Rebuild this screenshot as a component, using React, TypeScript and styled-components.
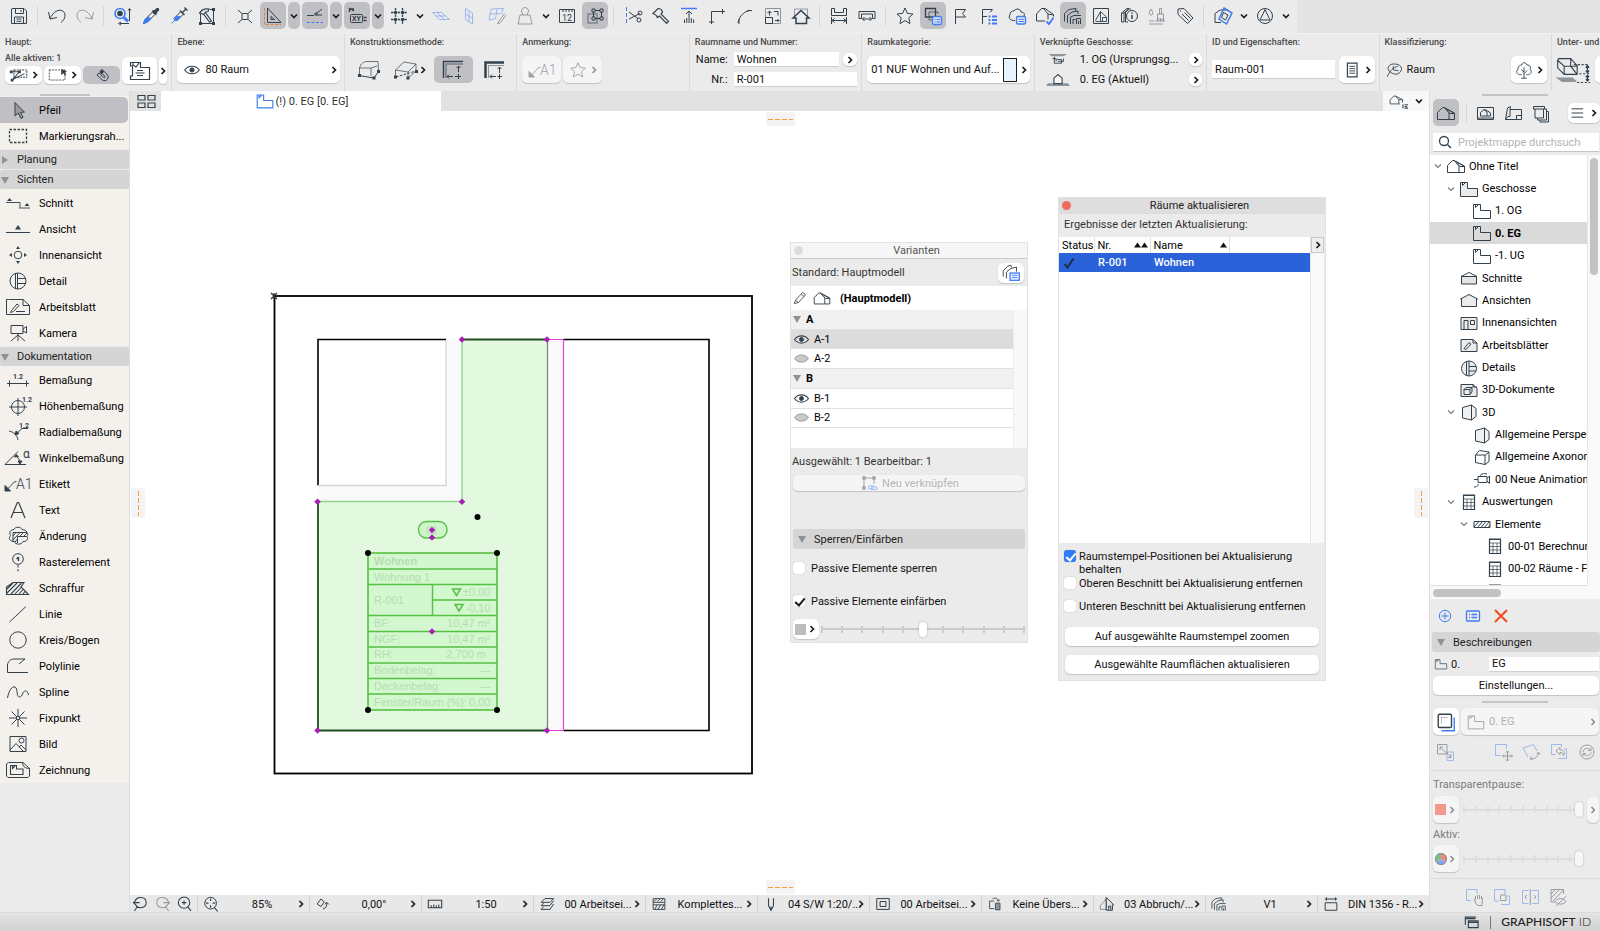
import React, { ReactNode } from "react";
import styled, { createGlobalStyle, css } from "styled-components";

const INK = "#33414c";
const BLUE = "#3f7df5";
const FONT = `Roboto, "Liberation Sans", sans-serif`;

const GlobalStyle = createGlobalStyle`
  * { box-sizing: border-box; }
  html, body { margin: 0; padding: 0; height: 100%; overflow: hidden; }
  body { font-family: ${FONT}; font-size: 11px; color: #111; background: #ebebeb; }
  #root { height: 100%; }
  button, input, select { font: inherit; color: inherit; margin: 0; }
  button { border: 0; background: none; padding: 0; }
  ul { list-style: none; margin: 0; padding: 0; }
`;

/* ---------- icons: drawn on a 24 x 24 grid around the point 12,12 ---------- */

const roomPath = "M3.5 5.5H10.5V11.5H20.5V19.5H3.5Z M5.5 5.5V8.5L8.5 5.5";
const housePath = "M3.5 18.5V11.5L8.5 6.5H10L20.5 12V18.5H3.5 M10 6.5L15 11.5V18.5 M12 7.5L20.5 12.5H16L12.5 9";
const eyePath = "M4 12C8 6.5 16 6.5 20 12C16 17.5 8 17.5 4 12Z";
const starPath = "M12 4L14.4 9.4L20 10L15.8 13.8L17 19.6L12 16.6L7 19.6L8.2 13.8L4 10L9.6 9.4Z";

const ICONS: Record<string, ReactNode> = {
  save: <path d="M5 4.5H17L19.5 7V19.5H4.5V5Z M8.5 4.5V9.5H16.5V4.5 M7.5 19.5V13H16.5V19.5 M9.5 15h5 M9.5 17.3h5 M14 6v2" />,
  undo: <path d="M3.5 8L5 15L12 13.5 M5 14.5C8 8 14 4 18.5 7.5C21 10 20.5 15 16 18.5" />,
  redo: <path d="M20.5 8L19 15L12 13.5 M19 14.5C16 8 10 4 5.5 7.5C3 10 3.5 15 8 18.5" />,
  find: <><circle cx="9" cy="9.5" r="5" stroke={BLUE} strokeWidth="1.6" /><circle cx="9" cy="9.5" r="2.4" fill={INK} /><path d="M13 13.5L17 17.5" stroke={BLUE} strokeWidth="3" /><path d="M18.5 5v12M9 19.5h9M17 6.5L18.5 4.5L20 6.5M10 18L7.5 19.5L10 21" /></>,
  dropper: <><path d="M13.5 6.5L17.5 10.5" strokeWidth="2" /><path d="M15.5 8.5L18.5 5.5" strokeWidth="3.4" strokeLinecap="round" /><path d="M13.5 8L6 15.5L4.5 19.5L8.5 18L16 10.5" /><path d="M4.5 19.5L6 16L9 13L12 14.5L8.5 18Z" fill={BLUE} stroke={BLUE} /></>,
  syringe: <><path d="M13 6.5L17.5 11M15.5 8.5L19 5M17.5 3.5L20.5 6.5" strokeWidth="1.4" /><path d="M14 7.5L7 14.5L9.5 17L16.5 10" /><path d="M10 12L7 14.5L9.5 17L13.5 13Z" fill={BLUE} stroke={BLUE} /><path d="M8 16L4.5 19.5" stroke={BLUE} /></>,
  hammerbox: <><path d="M5.5 10V19.5H18.5V5.5H15" /><path d="M4.5 9C7 5 10 4.5 14 5L13 7.5L10.5 8L8.5 10.5L6.5 9.5Z M10 8L16.5 17L14.5 18L8.5 10" strokeWidth="1.2" /><path d="M4 18h3v3H4zM17 18h3v3h-3zM17 4h3v3h-3z" fill={INK} stroke="none" /></>,
  cross: <><path d="M5 6L9.5 10M19 6L14.5 10M5 19L9.5 15M19 19L14.5 15" /><rect x="9" y="9.5" width="6" height="6" rx="1" /></>,
  setsquare: <><path d="M6.5 4V18.5H20Z M10 12.5V15.5H13.5Z" /><path d="M3.5 4V20.5H20" stroke="#e08236" strokeDasharray="3 1.5" /></>,
  guide: <><path d="M4 11.5H11 M13 8V12M11 10H15M14 9L19 5M13.5 11H19" /><path d="M4 18.5H20" stroke={BLUE} strokeDasharray="3 1.5" /></>,
  xy: <><rect x="5.5" y="10.5" width="12" height="8" rx="1" /><path d="M4.5 4V8M4.5 4L9 7M5 5H9M18.5 13.5h3M18.5 16.5h3" strokeWidth="1.4" /><text x="7" y="17" fontSize="7" fontWeight="700" fill={INK} stroke="none">XY</text></>,
  grid: <><path d="M8.5 4V20M15.5 4V20M4 8.5H20M4 15.5H20" strokeWidth="1.3" strokeDasharray="2.5 .8" /><path d="M7.5 7.5h2v2h-2zM14.5 7.5h2v2h-2zM7.5 14.5h2v2h-2zM14.5 14.5h2v2h-2z" fill={INK} /></>,
  plane: <path d="M3.5 8.5H12.5L20.5 15.5H10.5Z M8 8.5L15.5 15.5M7 12H16.5" stroke={BLUE} />,
  planeV: <path d="M8.5 4.5L15.5 9V20L8.5 15.5Z M8.5 10L15.5 14.5M12 7V17.5" stroke={BLUE} />,
  planeEdit: <><path d="M6 5L18.5 4.5L16 10M6 5L4 16L10 15M5 10L15 9.5M12 5L10.5 15" stroke={BLUE} /><path d="M19.5 9.5L14 17L12.5 20L15.5 18.5L21 11" /></>,
  weight: <path d="M7 11H17L19 20H5Z M9.5 11V9.5A3.5 3.5 0 1 1 14.5 9.5V11" />,
  ruler12: <><path d="M4.5 5.5H19.5V18.5H4.5Z M8 5.5V8M11 5.5V8M14 5.5V8M17 5.5V8" /><text x="7" y="17" fontSize="9" fill={INK} stroke="none">12</text></>,
  groupbox: <><path d="M5 10H14V19H5Z" opacity=".45" strokeWidth="1.5" /><path d="M10.5 6.5H18.5V14.5H10.5Z" /><path d="M9 5h3v3H9zM17 5h3v3h-3zM9 13h3v3H9zM17 13h3v3h-3z" fill="#bfbfc4" /></>,
  scissors: <><path d="M5.5 3V19" stroke={BLUE} strokeDasharray="4 2" /><path d="M8 8L17 14.5M8 15L19 9.5" /><circle cx="18" cy="16" r="2" /><circle cx="19" cy="9" r="2" /></>,
  axe: <path d="M4 9.5L9 4.5C11.5 4.5 13 6 13.5 8L12 10L19.5 17.5L17.5 19.5L10.5 12L8.5 13.5C8 11.5 6.5 10.5 4 9.5Z" strokeWidth="1.2" />,
  elevate: <><path d="M4 4.5H20" stroke={BLUE} strokeWidth="1.5" /><path d="M12 19V7.5M9 10L12 7L15 10M7.5 19V15.5M9.8 19V14M14.3 19V14M16.6 19V15.5" /></>,
  corner: <path d="M6.5 20V7.5H20 M4 18H9M17.5 5V10" />,
  arcCorner: <path d="M5 19C6 12 12 6 19 6.5 M19 6.5H14M6 20V15" />,
  resize: <><path d="M4.5 4.5H19.5V19.5H4.5Z" opacity=".5" /><path d="M4.5 13.5H11.5V19.5H4.5Z" /><path d="M8.5 11.5V7M6.5 9L8.5 7L10.5 9M14 16.5H18M16.5 15L18 16.5L16.5 18M13 7.5H17V11.5" /></>,
  home: <><path d="M5.5 12V5H18.5V12" opacity=".45" /><path d="M4 14L12 6.5L20 14H17.5V19.5H7V14Z" strokeWidth="1.5" /></>,
  width: <path d="M4.5 4.5V11.5H19.5V4.5H16.5V8.5H7.5V4.5Z M4.5 13V20M19.5 13V20M5 16.5H19M7.5 14.5L5 16.5L7.5 18.5M16.5 14.5L19 16.5L16.5 18.5" />,
  widthIn: <path d="M4 7.5H20V14.5H17.5V10H6.5V14.5H4Z M7.5 15H16.5M9.5 13L7.5 15L9.5 17M14.5 13L16.5 15L14.5 17" />,
  star: <path d={starPath} />,
  layersList: <><path d="M4.5 4.5H14.5V13H4.5Z" strokeWidth="1.3" /><path d="M8 8H17V10M8 8V16H11" opacity=".7" /><rect x="11.5" y="12.5" width="9" height="8" rx="1.5" fill="#d4e0f7" stroke={BLUE} strokeWidth="1.3" /><path d="M13.5 15.5h1M15.5 15.5h3.5M13.5 18h1M15.5 18h3.5" stroke={BLUE} /></>,
  flag: <path d="M6.5 20V5.5M6.5 5.5H16.5L13.5 9.5L16.5 13H6.5" />,
  flagList: <><path d="M5.5 20V5.5H15.5L13 8.5M5.5 12.5H10" /><path d="M11.5 12.5h2M15 12.5h5M11.5 16h2M15 16h5M11.5 19.5h2M15 19.5h5" stroke={BLUE} strokeWidth="2" /></>,
  cloudList: <><path d="M10 16.5C5 17 3 13.5 5 11C4.5 8 7.5 6.5 9 7C11 4 15.5 4.5 16 8C19 8 20 10 19 12" /><rect x="11.5" y="12.5" width="9" height="7.5" rx="1.5" stroke={BLUE} strokeWidth="1.4" /><path d="M13.5 15.3h5.5M13.5 17.5h5.5" stroke={BLUE} /></>,
  houseCheck: <><path d="M12 17H3.5V10L8.5 4.5H12L20.5 10.5V12.5 M8.5 4.5H10.5L15 10V15.5 M15 10L20.5 11" /><path d="M13.5 17.5L16 20L20.5 13.5" stroke={BLUE} strokeWidth="1.8" /></>,
  variants: <path d="M3.5 17.5V9.5L8 5.5L15 4.5L14.5 7.5M6.5 19V11.5L11 8L17 7V10M9.5 20V13L13 11.5H20M12 20V15.5H14.5M15.5 20V14.5H19.5V20M17.5 17V20" />,
  frameHouse: <><path d="M4.5 4.5H19.5V19.5H4.5Z" /><path d="M6.5 16.5L11.5 7.5V17.5M11.5 7.5L17.5 13V17.5H6.5M13.5 17V13.5H17" strokeWidth=".9" /></>,
  info3d: <><path d="M4.5 9V18H7V9Z M4.5 9L10 4.5H12L7 9M8.5 8V18H11M8.5 8L12.5 5H14" /><circle cx="15" cy="12" r="5.5" /><path d="M15 11V15M15 8.5V9.7" strokeWidth="1.5" /></>,
  paint: <path d="M6 5C8 8 8.5 11 6 11C3.5 11 4 8 6 5Z M12.5 10H18.5V15H12.5ZM14.5 10V4.5H16.5V10M10 17H20M4 20H18M4 17H9M12.5 15V17M15.5 15V17M18.5 15V17" />,
  tag: <path d="M5 5L11 4.5L20 14L14.5 19.5L5 10.5Z M9 10L15.5 16.5M11.5 8.5L17.5 14.5M7 7h1" />,
  cubeBlue: <><path d="M4 18.5V9.5L9 6H17M4 18.5H10" /><path d="M13 4L21 9L15.5 20L8 15Z" stroke={BLUE} strokeWidth="1.5" /><path d="M12.5 8.5L17 11L14.5 16L10.5 13.5Z" /></>,
  compass: <><circle cx="12" cy="12" r="7.5" /><path d="M12 5.5L17 16H7Z" /></>,

  marqueeA: <><path d="M6.5 6.5H20.5V14.5H6.5Z" strokeDasharray="2 1" strokeWidth="1.2" /><path d="M3 8.5H13.5M4.5 17.5L12 9M4 17.5L18 10.5" strokeWidth="1.2" /><path d="M2 7h3v3H2zM3 16h3v3H3zM11 7h3v3h-3z" fill={INK} stroke="none" /></>,
  marqueeB: <><path d="M2.5 6.5H19.5V17.5H2.5Z" strokeDasharray="2 1.2" /><path d="M15.5 5.5L22 8L19.5 9L21 11.5L19.5 12.5L18 10L15.5 12Z" fill={INK} stroke="none" /></>,
  magnet: <><path d="M6 12L12.5 18C17.5 21 21.5 15 18 11L12 5.5L9.5 8L15.5 13.5C16 15 15 15.5 14 15L8.5 9.5Z" strokeWidth="1.2" /><path d="M12 5.5L9 8.5L11.5 11L14.5 8Z" fill={INK} stroke="none" /></>,
  zone: <path d="M2.5 3.5H12.5V8.5H21.5V20.5H2.5V17H4.5V7H2.5Z M5 3.5V6L8 8L11 4M9 11.5H15M7.5 14H16.5M9 16.5H15" strokeWidth="1.2" />,
  eye: <><path d={eyePath} strokeWidth="1.2" /><circle cx="12" cy="12" r="2.3" fill={INK} /></>,
  eyeOff: <path d={eyePath} fill="#c9c9c9" stroke="#8f8f8f" />,
  slabA: <><path d="M2.5 17V10C4 5 7 4 9 3.5H21L21.5 12M2.5 10H14L20 8M14 10V18" opacity=".7" /><path d="M2 17.5L17 20L21.5 13.5" /><path d="M1 16h3v3H1zM15.5 18.5h3v3h-3zM20 12h3v3h-3z" fill={INK} stroke="none" /></>,
  slabB: <><path d="M1.5 18V12L10 4L22 6V13L14 20M1.5 12L14 14L22 6M14 14V20" opacity=".7" /><path d="M2 19L22 13" strokeDasharray="2.5 1.5" /><path d="M0 17.5h3v3H0zM12.5 18.5h3v3h-3zM21 12h3v3h-3z" fill={INK} stroke="none" /></>,
  cornerMeasure: <><path d="M2.5 20V3.5H22" strokeWidth="1.5" /><path d="M5 20V6H22" strokeWidth="1.5" opacity=".5" /><path d="M17.5 8V14M15.5 10L17.5 8L19.5 10M6 18.5H12M8 16.5L6 18.5L8 20.5M14 18.5H20M17.5 16V21" /></>,
  cornerMeasure2: <><path d="M3.5 20V4.5H22" strokeWidth="2.5" /><path d="M6.5 20V7.5H22" opacity=".5" /><path d="M17.5 9V15M15.5 11L17.5 9L19.5 11M8 18.5H14M10 16.5L8 18.5L10 20.5M15.5 18.5H20M17.5 16V21" /></>,
  a1: <><path d="M0 18.5L4 14.5C7 12 7 9.5 10.5 9.5" /><path d="M-1 13.5V19H4.5Z" fill="currentColor" /><text x="10" y="17" fontSize="14" fontWeight="300" fill="currentColor" stroke="none">A1</text></>,
  storeyUp: <><path d="M2 5.5H22L18 8H5Z" fill="#8d969c" stroke="none" /><path d="M8 8.5V15.5H16V11.5H11M6 10.5h4v3M12 13.5h6v-3" /></>,
  storeyHome: <><path d="M1 15.5H23L25 18.5H-1Z" fill="#8d969c" stroke="none" /><path d="M7.5 16V10L12 6L16.5 10V16Z" fill="#f5f5f5" strokeWidth="1.2" /></>,
  doc: <><path d="M7 4.5H17.5V19.5H7Z" strokeWidth="1.3" /><path d="M9 8h6.5M9 10.5h6.5M9 13h6.5M9 15.5h6.5" /></>,
  leaf: <path d="M3 21C7 12 11 9 17 7M7.5 15C1 11 4.5 3.5 12 4C18 4 22 6 22 11C21 17 14 20 7.5 15M11 12V7M11.5 12L18 13" strokeWidth="1.2" />,
  tree: <path d="M12 21V9M9 21H15M12 16L15.5 12.5M12 14L9 11.5M9.5 17C4 18 2.5 13 5.5 11.5C5 7 9 6.5 9.5 6.5C11 2.5 15 4 15 6.5C19 6.5 20 9.5 18.5 11.5C21.5 13 20 18 14.5 17" />,
  boxStack: <><path d="M-4 3V10L2 16H14V8L8 1.5H-3Z M-4 3L2 8.5H14M2 8.5V16M8 1.5V8.5L14 16" /><path d="M-6 19H10L14 23H0Z" fill="#8d969c" stroke="none" /><path d="M14 23.5H26M16 15.5H26M11 7H24" strokeDasharray="2 1.5" /><path d="M23.5 8V14M22 10L23.5 8L25 10M22 12.5L23.5 14.5L25 12.5M23.5 17V22M22 18.5L23.5 17L25 18.5M22 20.5L23.5 22L25 20.5" strokeWidth="1.2" /></>,

  fourUp: <path d="M4 6.5H11V11H4ZM14 6.5H21V11H14ZM4 14H11V18.5H4ZM14 14H21V18.5H14Z" strokeWidth="1.2" />,
  room: <path d={roomPath} />,
  roomGray: <path d={roomPath} fill="#ebebeb" />,
  roomBlue: <path d={roomPath} stroke={BLUE} strokeWidth="1.2" />,
  house: <path d={housePath} />,
  houseList: <><path d="M2.5 15.5V10.5L7 6H9L17.5 10.5V14M2.5 15.5H14M9 6L13 10.5V15.5M13 10.5H17.5" /><path d="M18 16V21M20 16.5h4M20 20.5h4M20 18.5h3" strokeWidth="1.3" /></>,

  arrow: <path d="M9 4.5V18L12.2 15L15 20.5L17 19.3L14.5 14.2H18.5Z" fill="#9b9b9f" />,
  marquee: <path d="M3.5 5.5H20.5V18.5H3.5Z" strokeDasharray="2.5 1.5" strokeWidth="1.3" />,
  section: <><path d="M0 11.5H14V16.5M13 17H24" opacity=".9" /><path d="M1 10L3.5 7L6 10ZM18.5 15L21 12L23.5 15Z" fill={INK} stroke="none" /></>,
  elevation: <><path d="M0 15.5H24" /><path d="M9 12.5L12 8L15 12.5Z" fill={INK} stroke="none" /></>,
  interior: <><circle cx="12" cy="12" r="3.8" /><path d="M10 6L12 3L14 6ZM10 18L12 21L14 18ZM6 10L3 12L6 14ZM18 10L21 12L18 14Z" fill={INK} stroke="none" /></>,
  detail: <><circle cx="12" cy="12" r="8" /><path d="M9.5 4.5V19.5M11.5 4V20M11.5 9.5H19.5M11.5 14.5H19.5" /></>,
  worksheet: <><path d="M2.5 4.5H17L23.5 10.5V19.5H.5V4.5Z M17 4.5V10.5H23.5" /><path d="M5.5 15.5L11 9L13 10.5L7.5 16.5L4.5 17.5ZM10 16.5H19" /></>,
  camera: <path d="M5 4.5H17V12.5H5Z M17 8L20.5 5.5V12L17 10M12 12.5V20M12 14L5 20M12 14L19 20" />,
  dim: <><path d="M1 15.5H23M3.5 12.5V18.5M20.5 12.5V18.5" /><text x="7" y="11" fontSize="7" fontWeight="700" fill={INK} stroke="none">1.2</text></>,
  levelDim: <><circle cx="12" cy="13" r="6.5" /><path d="M12 4V22M3 13H21" /><text x="16" y="7.5" fontSize="7" fontWeight="700" fill={INK} stroke="none">1.2</text></>,
  radialDim: <><path d="M3 11C8 12 11 15 12 20M10 14L16 8.5H22" /><path d="M9 15L10 11L13 13.5Z" fill={INK} /><text x="13" y="7.5" fontSize="7" fontWeight="700" fill={INK} stroke="none">1.2</text></>,
  angleDim: <><path d="M-1 18.5H20M-1 18.5L12 5.5M10 10C13 12 14 15 14 17" /><path d="M8.5 11L10 8.5L12.5 10.5ZM12 15H16L14 18Z" fill={INK} /><text x="17" y="12" fontSize="12" fill={INK} stroke="none">α</text></>,
  textA: <path d="M5 20L11.3 4.5H12.7L19 20M7.5 14.5H16.5" strokeWidth="1.2" />,
  change: <><path d="M8 5.5C9 2.5 15 2.5 16 5.5C21 6 23 10 21 12.5C23 15 20 18 17 17.5C16 21 9 21 8.5 17.5C4 18 2 14 4.5 11.5C2.5 8 5 5.5 8 5.5Z" /><path d="M7 8.5H21M7 8.5V18M11.5 12.5H21M11.5 12.5V19M7 12L10 8.5M7 16L14 8.5M14 12L17.5 8.5M9 18L11.5 15M18 12L21 9" /></>,
  gridEl: <><circle cx="12" cy="9" r="5.3" /><path d="M12 15V22" strokeDasharray="2.5 1.5" /><path d="M12.5 7V11M12.5 7L10.5 9" strokeWidth="1.4" /></>,
  hatch: <path d="M.5 18.5V11L7 6.5H18L15 11L22.5 18.5Z M1 17L11 7M5 18L15.5 7M9 18L15 11.5M13 18L17 13.5M17 18L19 15.5M1 13L7 7" strokeWidth="1.1" />,
  line: <path d="M3.5 20L20 4.5" />,
  circle: <circle cx="12" cy="12" r="8.2" />,
  polyline: <path d="M22 18.5H1.5V11C2 7 5 5 8 5H19L13 10" />,
  spline: <path d="M1.5 18C3 10 6 6 9 7C12 8 10 17 13.5 17C17 17 16 11 19.5 11C21.5 11 22 12.5 22.5 15" />,
  hotspot: <path d="M12 3V10M12 14V21M3 12H10M14 12H21M5.5 5.5L10.5 10.5M13.5 13.5L18.5 18.5M18.5 5.5L13.5 10.5M10.5 13.5L5.5 18.5M10.5 10.5H13.5V13.5H10.5Z" />,
  image: <><path d="M4 4.5H20V19.5H4Z M4 18L10 11.5L17 19M13 15L15 13L20 18" /><circle cx="15.5" cy="8.5" r="2.5" /></>,
  drawing: <><path d="M2.5 4.5H17L23.5 10.5V18L22 19.5H2L.5 18V6Z M17 4.5C16 8 19 10.5 23.5 10.5" /><path d="M4.5 7.5H10.5V11H17V16.5H4.5Z M6.5 8V10.5L9 8" strokeWidth="1.1" /></>,

  frameHouseSmall: <><path d="M4.5 6.5H20.5V18.5H4.5Z M4.5 17H20.5" /><path d="M7.5 15V11.5L11 8.5L14 11V15ZM11 8.5L14 9.5L17.5 12V15H14" /></>,
  layoutBook: <path d="M4.5 18.5L6.5 7L9.5 5.5L9 8.5H20.5V18.5H4.5L7 15.5H9V8.5M15.5 18V14.5H20.5" />,
  publisher: <path d="M4.5 5.5H15.5V8H4.5ZM6 8V17H14.5V8M15.5 8H17.5V19H8.5V17M17.5 10.5H19.5V21H11V19" />,
  menu: <path d="M3 7H17M3 12H17M3 17H17" strokeWidth="1.2" />,
  search: <><circle cx="11" cy="11" r="4.5" strokeWidth="1.3" /><path d="M14.5 14.5L18 18" strokeWidth="1.5" /></>,
  sections: <><path d="M4.5 10.5H19.5V18H4.5Z" fill="#e4e4e4" /><path d="M4 10.5L12 6.5L20 10.5" /></>,
  elevations: <path d="M4.5 18.5V11H3.5L12 6.5L20.5 11H19.5V18.5Z" fill="#ebebeb" />,
  interiors: <><path d="M4 6.5H20V18.5H4Z" fill="#ebebeb" /><path d="M7 18V9.5H11V18M13.5 9.5H17.5V13.5H13.5Z" /></>,
  sheetSmall: <><path d="M4 6.5H16L20 10V18.5H4Z" fill="#ebebeb" /><path d="M7 15.5L12 9.5L14 11L9 16.5ZM16 6.5V10H20" /></>,
  detailSmall: <><circle cx="12" cy="12.5" r="7.5" fill="#ebebeb" /><path d="M9.5 6V19M12 5V20M12 10.5H19M12 15H19" /></>,
  doc3d: <><path d="M4 6.5H16L20 10V18.5H4Z" fill="#ebebeb" /><path d="M7 11.5L9 9.5H15V14L13 16.5H7ZM7 11.5H13V16.5M13 11.5L15 9.5M16 6.5V9H20" /></>,
  cube: <path d="M5.5 7.5L14.5 5V20L5.5 18Z M14.5 5L19 8.5V16.5L14.5 20" fill="#f1f1f1" />,
  axono: <path d="M5.5 10H15V19.5L5.5 17.5ZM5.5 10L9.5 5.5L19 7L15 10.5M19 7V16.5L15 19.5" />,
  anim: <path d="M8 9.5H17V15.5H8ZM17 11.5L19.5 9V16.5L17 14M11 9.5C9 7 14 6 17 7M4 20C8 20 8 18 8.5 17M4 12.5H8" />,
  tableGrid: <><path d="M6.5 5H17.5V19.5H6.5ZM6 5.5H18" strokeWidth="1.2" /><path d="M6.5 9H17.5M6.5 12.5H17.5M6.5 16H17.5M10 9V19.5M14 9V19.5" strokeWidth=".7" /></>,
  wall: <path d="M4 9.5H20V15.5H4ZM4 15L9 9.5M7.5 15.5L12.5 9.5M11 15.5L16 9.5M14.5 15.5L19.5 9.5M18 15.5L20 13" />,
  plus: <><circle cx="12" cy="12" r="5.7" stroke={BLUE} /><path d="M12 8.5V15.5M8.5 12H15.5" stroke={BLUE} /></>,
  list: <><rect x="5.5" y="7" width="13" height="10" rx="1" stroke={BLUE} strokeWidth="1.3" /><path d="M8 10.5h1M10.5 10.5H16M8 13.5h1M10.5 13.5H16" stroke={BLUE} strokeWidth="1.3" /></>,
  del: <path d="M6 6L18 18M18 6L6 18" stroke="#f04a1d" strokeWidth="2" />,
  trace: <><path d="M7 21.5H21V7" stroke={BLUE} strokeWidth="1.5" /><rect x="3.5" y="3.5" width="14.5" height="14.5" rx="1.5" strokeWidth="1.5" /><path d="M7 14V7H14" opacity=".4" /></>,
  swap: <><path d="M14 12V20.5H20.5V12Z" stroke={BLUE} /><path d="M4.5 4.5H14V14H4.5ZM7 7L18 17M7 10V7H10M18 14V17.5H15" /></>,
  traceMove: <><path d="M10 15.5H4.5V4.5H15.5V9" stroke={BLUE} /><path d="M16.5 11V21M11.5 16H21.5M15 12.5L16.5 11L18 12.5M15 19.5L16.5 21L18 19.5M13 14.5L11.5 16L13 17.5M20 14.5L21.5 16L20 17.5" /></>,
  traceRotate: <><path d="M9 17L4 8L14.5 4.5L18 11" stroke={BLUE} /><path d="M11 18.5C15 20 19 17 19.5 13M17.5 14L19.5 12L21 14.5M13 16.5L11 18.5L13 20" /></>,
  traceReset: <><path d="M8.5 14.5H4.5V4.5H14.5V7M11 18.5H19.5V9H17" stroke={BLUE} /><path d="M9 11L13 7.5V10C17 9.5 18 13 16.5 15.5C16 13 15 12.5 13 12.5V14.5Z" /></>,
  refresh: <><circle cx="12" cy="12" r="7" /><path d="M8 12C8 8 14 7 15.5 10.5M13 10.5H16V8M16 12.5C15.5 16 10 17 8.5 13.5M11 13.5H8V16" /></>,
  hand: <><path d="M9 15.5H4.5V4.5H15V9" stroke={BLUE} /><path d="M12 14L14 19L16 20.5H20L20.5 13M13.5 15V11M15.5 14V10M17.5 14V10M19.5 14V11" /></>,
  overlap: <><path d="M9 16H4.5V4.5H15V9M11 19.5H19.5V11H17" stroke={BLUE} /><path d="M10.5 10H16V15.5H10.5Z" /></>,
  split: <><path d="M10.5 5.5H4.5V18.5H10.5M14 5.5H20.5V18.5H14" stroke={BLUE} /><path d="M12.3 4V20M9 10L7 12L9 14M16 10L18 12L16 14" /></>,
  hatchOff: <><path d="M5 4.5H17.5V9M5 4.5V17H9M5 9L9.5 4.5M5 13L13.5 4.5M7 16L17.5 5" /><path d="M9 16.5C12 12.5 17 12.5 20 16.5C17 20 12 20 9 16.5ZM20.5 11L10 21" /></>,

  zoomPrev: <path d="M6 8.5C9 3 18.5 4.5 18.5 11C18.5 17 9 19 6.5 13.5M4 11H11M6.5 8.5L4 11L6.5 13.5M8.5 15.5L5 20.5" strokeWidth="1.2" />,
  zoomNext: <path d="M18 8.5C15 3 5.5 4.5 5.5 11C5.5 17 15 19 17.5 13.5M20 11H13M17.5 8.5L20 11L17.5 13.5M15.5 15.5L19 20.5" strokeWidth="1.2" />,
  zoomIn: <><circle cx="11.5" cy="11" r="6.5" strokeWidth="1.2" /><path d="M11.5 8.5V13.5M9 11H14M15.5 15.5L19.5 20.5" strokeWidth="1.2" /></>,
  zoomFit: <><circle cx="11.5" cy="11" r="7" strokeWidth="1.2" /><path d="M11.5 5.5V8.5M11.5 13.5V16.5M6 11H9M14 11H17M16 16L20 21" strokeWidth="1.4" /></>,
  rotate: <path d="M5 12L9.5 6L13.5 9.5L9.5 15ZM12 18C15.5 17 17 14 16.5 10.5M14 12.5L16.5 10L19 12.5" strokeWidth="1.2" />,
  scale: <path d="M4 7.5H20V16.5H4ZM7.5 16V13.5M10.5 16V12.5M13.5 16V13.5M16.5 16V12.5" strokeWidth="1.3" />,
  layers: <path d="M5 10L9.5 5.5H20L15.5 10ZM5 14L8 11M5 14H15.5L20 8M5 18.5L8 15M5 18.5H15.5L20 12" strokeWidth="1.2" />,
  composite: <path d="M5 5.5H19V18.5H5ZM5 10H19M5 13H19M7 18L10 13M11 18L14 13M15 18L18 13M6 9L9 6M10 9L13 6M14 9L17 6" strokeWidth="1.1" />,
  pen: <path d="M9 5V14L12 19.5L15 14V5M12 15V19" strokeWidth="1.3" />,
  frame: <path d="M4.5 5.5H19.5V18.5H4.5ZM8.5 9H15.5V15H8.5Z" strokeWidth="1.2" />,
  override: <><path d="M11 17.5H5.5V8.5H11M9 6C12 4 15 5 16 8M14 7L16 9L17.5 6.5" /><path d="M12.5 11H18V19H12.5Z" fill="#8d969c" /></>,
  reno: <><path d="M4 18.5V14L11 6L11.5 18.5Z" opacity=".6" /><path d="M11 4L20 13H18.5V19.5H11V4M14 19V14.5H16.5V19" strokeWidth="1.2" /></>,
  dimStd: <path d="M5 10.5H19V19.5H5ZM4.5 6H19.5M6.5 4V8M17.5 4V8" strokeWidth="1.2" />,
  pencil: <path d="M4.5 19.5L6 15L15.5 4.5L19.5 7.5L10 18ZM13.5 6.5L17.5 10M6 15L10 18" strokeWidth="1.1" />,
  variantsList: <><path d="M3.5 16V9.5L8.5 4.5L12 3.5L12.5 6M7 18V11L12 7L18 5.5V10.5" /><rect x="11" y="12" width="10" height="8" fill="#e9f0ff" stroke={BLUE} strokeWidth="1.4" /><path d="M13 14.5h6M13 17h6" stroke={BLUE} /></>,
  relink: <><path d="M6 6V18M6 6H18V13" strokeWidth="1.2" /><path d="M4 4h4v4h-4zM16 4h4v4h-4zM4 16h4v4h-4z" fill={INK} stroke="none" /><path d="M11.5 15.5H17V19H11.5ZM15 16.5H21.5V20H15Z" stroke={BLUE} strokeWidth="1.2" /></>,
  windows: <path d="M4.5 15.5V5.5H18.5M4.5 7.5H18M8.5 10.5H21.5V19.5H8.5ZM8.5 12.5H21.5" strokeWidth="1.5" />,
};

const Svg = styled.svg<{ $dim?: boolean }>`
  flex: none;
  display: block;
  overflow: visible;
  color: ${INK};
  opacity: ${(p) => (p.$dim ? 0.45 : 1)};
`;

const Icon = ({ n, size = 24, dim }: { n: string; size?: number; dim?: boolean }) => (
  <Svg width={size} height={size} viewBox="0 0 24 24" fill="none" stroke="currentColor" $dim={dim} aria-hidden="true">
    {ICONS[n]}
  </Svg>
);

const Chevron = ({ down, thin, dim }: { down?: boolean; thin?: boolean; dim?: boolean }) => (
  <Svg width={10} height={10} viewBox="0 0 10 10" fill="none" stroke={thin ? "#7d7d7d" : "#1d1d1f"} strokeWidth={thin ? 1.2 : 1.7} $dim={dim} aria-hidden="true">
    <path d={down ? "M2 3.5L5 6.5L8 3.5" : "M3.5 2L6.5 5L3.5 8"} />
  </Svg>
);

const Triangle = ({ right }: { right?: boolean }) => (
  <Svg width={8} height={8} viewBox="0 0 8 8" aria-hidden="true">
    <path d={right ? "M1 0L7 4L1 8Z" : "M0 1H8L4 8Z"} fill="#8e9294" />
  </Svg>
);

const SortUp = () => (
  <Svg width={7} height={6} viewBox="0 0 7 6" aria-hidden="true"><path d="M0 5.5H7L3.5 .5Z" fill="#111" /></Svg>
);

/* ---------- shared controls ---------- */

const raised = css`
  background: #fff;
  border-radius: 5px;
  box-shadow: 0 1px 1px rgba(0, 0, 0, 0.16), 0 0 1px rgba(0, 0, 0, 0.12);
`;

const RaisedButton = styled.button<{ $w?: number; $h?: number; $off?: boolean; $on?: boolean }>`
  ${raised}
  display: flex;
  align-items: center;
  justify-content: center;
  flex: none;
  width: ${(p) => (p.$w ? `${p.$w}px` : "auto")};
  height: ${(p) => p.$h ?? 27}px;
  ${(p) => p.$off && "background: #f5f5f5; color: #a9a9a9;"}
  ${(p) => p.$on && "background: #bfbfc4; box-shadow: none;"}
`;

const TextInput = styled.input<{ $h?: number }>`
  flex: 1;
  min-width: 0;
  height: ${(p) => p.$h ?? 15}px;
  border: 0;
  border-bottom: 1px solid #cfcfcf;
  border-radius: 0;
  padding: 0 3px;
  background: #fff;
  outline: none;
`;

const Select = styled.select`
  appearance: none;
  flex: 1;
  min-width: 0;
  border: 0;
  padding: 0;
  background: transparent;
  outline: none;
  opacity: 1;
`;

const CheckInput = styled.input`
  appearance: none;
  position: relative;
  flex: none;
  width: 12px;
  height: 12px;
  border-radius: 3px;
  background: #fff;
  box-shadow: 0 0 1px rgba(0, 0, 0, 0.35);
  &:checked::after {
    content: "";
    position: absolute;
    left: 4px;
    top: 1px;
    width: 4px;
    height: 8px;
    border: solid #1d1d1f;
    border-width: 0 2px 2px 0;
    transform: rotate(40deg);
  }
  &.accent:checked { background: #2f7cf6; }
  &.accent:checked::after { border-color: #fff; }
`;

const CheckLabel = styled.label<{ $gap?: number }>`
  display: flex;
  align-items: flex-start;
  gap: ${(p) => p.$gap ?? 3}px;
  line-height: 13px;
`;

const Slider = styled.input<{ $off?: boolean }>`
  appearance: none;
  flex: 1;
  min-width: 0;
  height: 16px;
  margin: 0;
  --line: ${(p) => (p.$off ? "#dedede" : "#cbcbcb")};
  background:
    repeating-linear-gradient(90deg, var(--line) 0 2px, transparent 2px calc((100% - 2px) / 10)) center / 100% 7px no-repeat,
    linear-gradient(var(--line), var(--line)) center / 100% 2px no-repeat;
  &::-webkit-slider-thumb {
    appearance: none;
    width: 8px;
    height: 15px;
    border-radius: 4px;
    background: ${(p) => (p.$off ? "#f7f7f7" : "#fff")};
    box-shadow: 0 0 2px rgba(0, 0, 0, 0.3);
  }
`;

/* ---------- top toolbar ---------- */

const Screen = styled.div`
  display: flex;
  flex-direction: column;
  height: 100vh;
  overflow: hidden;
`;

const Toolbar = styled.header`
  flex: none;
  display: flex;
  height: 33px;
  background: #e4e4e4;
`;

const ToolGroup = styled.div`
  display: flex;
  align-items: center;
  padding: 0 4px 2px 5px;
  background: #ebebeb;
`;

const ToolButton = styled.button<{ $on?: boolean; $narrow?: boolean }>`
  display: flex;
  align-items: center;
  justify-content: center;
  flex: none;
  width: ${(p) => (p.$narrow ? 12 : 26)}px;
  height: 27px;
  margin: 0 1px;
  border-radius: 5px;
  background: ${(p) => (p.$on ? "#bfbfc4" : "transparent")};
`;

const ToolDivider = styled.span`
  flex: none;
  width: 1px;
  height: 20px;
  margin: 0 5px 0 4px;
  background: #d6d6d6;
`;

type Tool = { n: string; label: string; on?: boolean; dim?: boolean; menu?: boolean };
const TOOLS: Tool[][] = [
  [{ n: "save", label: "Sichern" }],
  [{ n: "undo", label: "Widerrufen" }, { n: "redo", label: "Wiederholen", dim: true }],
  [{ n: "find", label: "Suchen" }, { n: "dropper", label: "Aufnehmen" }, { n: "syringe", label: "Übertragen" }, { n: "hammerbox", label: "Bearbeiten" }],
  [
    { n: "cross", label: "Schnittpunkte" },
    { n: "setsquare", label: "Hilfslinien", on: true, menu: true },
    { n: "guide", label: "Fangführung", on: true, menu: true },
    { n: "xy", label: "Tracker", on: true, menu: true },
    { n: "grid", label: "Raster", menu: true },
    { n: "plane", label: "Ebene", dim: true },
    { n: "planeV", label: "Vertikale Ebene", dim: true },
    { n: "planeEdit", label: "Ebene bearbeiten", dim: true },
    { n: "weight", label: "Schwerkraft", dim: true, menu: true },
    { n: "ruler12", label: "Messen" },
    { n: "groupbox", label: "Gruppieren", on: true },
  ],
  [
    { n: "scissors", label: "Trennen" }, { n: "axe", label: "Aufteilen" }, { n: "elevate", label: "Höhe" },
    { n: "corner", label: "Ecke" }, { n: "arcCorner", label: "Abrunden" }, { n: "resize", label: "Größe ändern" }, { n: "home", label: "Dach" },
  ],
  [{ n: "width", label: "Breite" }, { n: "widthIn", label: "Innenbreite" }],
  [
    { n: "star", label: "Favoriten" }, { n: "layersList", label: "Ebenen", on: true }, { n: "flag", label: "Marke" },
    { n: "flagList", label: "Markenliste" }, { n: "cloudList", label: "Cloud" }, { n: "houseCheck", label: "Modell prüfen" },
    { n: "variants", label: "Varianten", on: true }, { n: "frameHouse", label: "Ansicht" }, { n: "info3d", label: "Info" },
    { n: "paint", label: "Oberfläche", dim: true }, { n: "tag", label: "Etikett" },
  ],
  [{ n: "cubeBlue", label: "3D", menu: true }, { n: "compass", label: "Orientierung", menu: true }],
];

const TopToolbar = () => (
  <Toolbar>
    <ToolGroup>
      {TOOLS.map((group, i) => (
        <React.Fragment key={i}>
          {i > 0 && <ToolDivider />}
          {group.map((t) => (
            <React.Fragment key={t.n}>
              <ToolButton $on={t.on} aria-label={t.label}><Icon n={t.n} dim={t.dim} /></ToolButton>
              {t.menu && <ToolButton $on={t.on} $narrow aria-label={`${t.label}: Optionen`}><Chevron down /></ToolButton>}
            </React.Fragment>
          ))}
        </React.Fragment>
      ))}
    </ToolGroup>
  </Toolbar>
);

/* ---------- info bar ---------- */

const InfoBar = styled.section`
  flex: none;
  display: grid;
  grid-template-columns: repeat(9, minmax(0, 1fr)) 48px;
  height: 58px;
  background: #ebebeb;
  border-top: 1px solid #f0f0f0;
`;

const InfoCell = styled.div`
  display: flex;
  flex-direction: column;
  min-width: 0;
  padding: 0 4px 0 5px;
  border-right: 1px solid #dadada;
  overflow: hidden;
  &:last-child { border-right: 0; }
`;

const smallText = css`
  font-size: 9px;
  font-weight: 500;
  line-height: 16px;
  white-space: nowrap;
  color: #4a4a4a;
`;

const InfoLabel = styled.div`
  ${smallText}
  flex: none;
`;

const InfoBody = styled.div<{ $rows?: boolean }>`
  flex: 1;
  display: flex;
  ${(p) => (p.$rows ? "flex-direction: column; justify-content: flex-end; gap: 5px; padding-bottom: 4px;" : "align-items: flex-end; gap: 2px; padding-bottom: 8px;")}
`;

const MainCol = styled.div`
  ${smallText}
  display: flex;
  flex-direction: column;
`;

const Row = styled.div<{ $gap?: number; $fill?: boolean }>`
  display: flex;
  align-items: center;
  gap: ${(p) => p.$gap ?? 2}px;
  ${(p) => p.$fill && "flex: 1; min-width: 0;"}
`;

const SelectBox = styled.label<{ $off?: boolean }>`
  ${raised}
  flex: 1;
  display: flex;
  align-items: center;
  gap: 2px;
  min-width: 0;
  height: 27px;
  padding: 0 1px 0 4px;
  ${(p) => p.$off && "background: #f5f5f5; color: #b0b0b0;"}
`;

const FieldLabel = styled.label`
  width: 33px;
  margin-right: 2px;
  text-align: right;
`;

const Value = styled.span`
  flex: 1;
  overflow: hidden;
  white-space: nowrap;
  text-overflow: ellipsis;
`;

const Swatch = styled.span`
  flex: none;
  width: 14px;
  height: 24px;
  border: 1px solid #1d1d1f;
  background: #e6f3ff;
`;

const IconSlot = styled.span<{ $w: number; $h?: number }>`
  flex: none;
  display: flex;
  align-items: center;
  justify-content: center;
  width: ${(p) => p.$w}px;
  height: ${(p) => p.$h ?? 27}px;
`;

const InfoSection = () => (
  <InfoBar>
    <InfoCell>
      <InfoLabel>Haupt:</InfoLabel>
      <InfoBody>
        <MainCol>
          <span>Alle aktiven: 1</span>
          <Row>
            <RaisedButton $w={37} $h={18} aria-label="Auswahlmethode"><Icon n="marqueeA" size={22} /><Chevron /></RaisedButton>
            <RaisedButton $w={37} $h={18} aria-label="Auswahlrahmen"><Icon n="marqueeB" size={22} /><Chevron /></RaisedButton>
            <RaisedButton $w={37} $h={18} $on aria-label="Magnet"><Icon n="magnet" size={20} /></RaisedButton>
          </Row>
        </MainCol>
        <RaisedButton $w={35} aria-label="Raum-Einstellungen"><Icon n="zone" size={24} /></RaisedButton>
        <RaisedButton $w={8} aria-label="Favoriten"><Chevron /></RaisedButton>
      </InfoBody>
    </InfoCell>
    <InfoCell>
      <InfoLabel>Ebene:</InfoLabel>
      <InfoBody>
        <SelectBox>
          <Icon n="eye" size={22} />
          <Select aria-label="Ebene"><option>80 Raum</option></Select>
          <Chevron />
        </SelectBox>
      </InfoBody>
    </InfoCell>
    <InfoCell>
      <InfoLabel>Konstruktionsmethode:</InfoLabel>
      <InfoBody>
        <IconSlot $w={38}><Icon n="slabA" size={24} /></IconSlot>
        <IconSlot $w={42}><Icon n="slabB" size={24} /><Chevron /></IconSlot>
        <RaisedButton $w={39} $on aria-label="Bezugslinie innen"><Icon n="cornerMeasure" size={24} /></RaisedButton>
        <IconSlot $w={39}><Icon n="cornerMeasure2" size={24} /></IconSlot>
      </InfoBody>
    </InfoCell>
    <InfoCell>
      <InfoLabel>Anmerkung:</InfoLabel>
      <InfoBody>
        <RaisedButton $w={39} $off disabled aria-label="Etikett"><Icon n="a1" dim /></RaisedButton>
        <RaisedButton $w={39} $off disabled aria-label="Etikett-Favoriten"><Icon n="star" size={22} dim /><Chevron dim /></RaisedButton>
      </InfoBody>
    </InfoCell>
    <InfoCell>
      <InfoLabel>Raumname und Nummer:</InfoLabel>
      <InfoBody $rows>
        <Row $gap={4}>
          <FieldLabel htmlFor="room-name">Name:</FieldLabel>
          <TextInput id="room-name" defaultValue="Wohnen" />
          <RaisedButton $w={14} $h={13} aria-label="Namen wählen"><Chevron /></RaisedButton>
        </Row>
        <Row $gap={4}>
          <FieldLabel htmlFor="room-no">Nr.:</FieldLabel>
          <TextInput id="room-no" defaultValue="R-001" />
        </Row>
      </InfoBody>
    </InfoCell>
    <InfoCell>
      <InfoLabel>Raumkategorie:</InfoLabel>
      <InfoBody>
        <SelectBox>
          <Select aria-label="Raumkategorie"><option>01 NUF Wohnen und Auf...</option></Select>
          <Swatch />
          <Chevron />
        </SelectBox>
      </InfoBody>
    </InfoCell>
    <InfoCell>
      <InfoLabel>Verknüpfte Geschosse:</InfoLabel>
      <InfoBody $rows>
        <Row $gap={4}>
          <IconSlot $w={36} $h={15}><Icon n="storeyUp" size={22} /></IconSlot>
          <Value>1. OG (Ursprungsg...</Value>
          <RaisedButton $w={13} $h={13} aria-label="Ursprungsgeschoss"><Chevron /></RaisedButton>
        </Row>
        <Row $gap={4}>
          <IconSlot $w={36} $h={15}><Icon n="storeyHome" size={22} /></IconSlot>
          <Value>0. EG (Aktuell)</Value>
          <RaisedButton $w={13} $h={13} aria-label="Geschoss anzeigen"><Chevron /></RaisedButton>
        </Row>
      </InfoBody>
    </InfoCell>
    <InfoCell>
      <InfoLabel as="label" htmlFor="room-id">ID und Eigenschaften:</InfoLabel>
      <InfoBody>
        <Row $gap={4} $fill>
          <TextInput id="room-id" $h={19} defaultValue="Raum-001" />
          <RaisedButton $w={36} aria-label="Eigenschaften"><Icon n="doc" size={22} /><Chevron /></RaisedButton>
        </Row>
      </InfoBody>
    </InfoCell>
    <InfoCell>
      <InfoLabel>Klassifizierung:</InfoLabel>
      <InfoBody>
        <Row $gap={4} $fill>
          <Icon n="leaf" size={18} />
          <Value>Raum</Value>
          <RaisedButton $w={36} aria-label="Klassifizierung"><Icon n="tree" size={22} /><Chevron /></RaisedButton>
        </Row>
      </InfoBody>
    </InfoCell>
    <InfoCell>
      <InfoLabel>Unter- und Oberkante:</InfoLabel>
      <InfoBody>
        <IconSlot $w={36}><Icon n="boxStack" size={26} /></IconSlot>
        <RaisedButton $w={36} aria-label="Höhen" />
      </InfoBody>
    </InfoCell>
  </InfoBar>
);

/* ---------- tool palette ---------- */

const Main = styled.main`
  flex: 1;
  min-height: 0;
  display: flex;
`;

const Palette = styled.nav`
  flex: none;
  width: 130px;
  border-right: 1px solid #dcdcdc;
  background: #ebebeb;
`;

const Grip = styled.div<{ $w: number }>`
  width: ${(p) => p.$w}px;
  height: 2px;
  margin: 0 auto;
  background: #c4c4c4;
`;

const PaletteGrip = styled.div`
  padding-top: 3px;
`;

const PaletteList = styled.ul`
  padding-top: 1px;
  background: #f4f1ec;
`;

const PaletteItem = styled.button<{ $on?: boolean }>`
  display: flex;
  align-items: center;
  gap: 9px;
  width: 128px;
  height: 26px;
  padding-left: 6px;
  border-radius: 0 5px 5px 0;
  text-align: left;
  white-space: nowrap;
  color: #000;
  background: ${(p) => (p.$on ? "#bfbfc4" : "transparent")};
`;

const PaletteHeader = styled.button`
  display: flex;
  align-items: center;
  gap: 8px;
  width: 129px;
  height: 19px;
  margin-top: 1px;
  padding-left: 1px;
  border-radius: 2px;
  background: #d5d5d5;
  color: #222;
`;

const paletteItems = (items: [string, string][], on?: string) => (
  <PaletteList>
    {items.map(([n, label]) => (
      <li key={n}><PaletteItem $on={n === on}><Icon n={n} />{label}</PaletteItem></li>
    ))}
  </PaletteList>
);

const ToolPalette = () => (
  <Palette>
    <PaletteGrip><Grip $w={50} /></PaletteGrip>
    {paletteItems([["arrow", "Pfeil"], ["marquee", "Markierungsrah..."]], "arrow")}
    <PaletteHeader><Triangle right />Planung</PaletteHeader>
    <PaletteHeader><Triangle />Sichten</PaletteHeader>
    {paletteItems([["section", "Schnitt"], ["elevation", "Ansicht"], ["interior", "Innenansicht"], ["detail", "Detail"], ["worksheet", "Arbeitsblatt"], ["camera", "Kamera"]])}
    <PaletteHeader><Triangle />Dokumentation</PaletteHeader>
    {paletteItems([
      ["dim", "Bemaßung"], ["levelDim", "Höhenbemaßung"], ["radialDim", "Radialbemaßung"], ["angleDim", "Winkelbemaßung"],
      ["a1", "Etikett"], ["textA", "Text"], ["change", "Änderung"], ["gridEl", "Rasterelement"], ["hatch", "Schraffur"],
      ["line", "Linie"], ["circle", "Kreis/Bogen"], ["polyline", "Polylinie"], ["spline", "Spline"], ["hotspot", "Fixpunkt"],
      ["image", "Bild"], ["drawing", "Zeichnung"],
    ])}
  </Palette>
);

/* ---------- centre: tabs, canvas, quick options ---------- */

const Center = styled.div`
  flex: 1;
  min-width: 0;
  display: flex;
  flex-direction: column;
`;

const Tabs = styled.div`
  flex: none;
  display: flex;
  height: 20px;
  background: #e2e2e2;
`;

const TabOverview = styled.button`
  display: flex;
  align-items: center;
  justify-content: center;
  width: 31px;
`;

const Tab = styled.button`
  display: flex;
  align-items: center;
  justify-content: center;
  width: 280px;
  background: #fff;
  color: #333;
`;

const TabView = styled.button`
  display: flex;
  align-items: center;
  justify-content: center;
  gap: 6px;
  width: 46px;
  margin-left: auto;
  background: #f8f8f8;
`;

const Canvas = styled.div`
  flex: 1;
  min-height: 0;
  position: relative;
  background: #fff;
  overflow: hidden;
`;

const Plan = styled.svg`
  position: absolute;
  left: 136px;
  top: 177px;
`;

const Handle = styled.span<{ $side: "top" | "bottom" | "left" | "right" }>`
  position: absolute;
  display: flex;
  align-items: center;
  justify-content: center;
  background: #f4f4f4;
  border-radius: 2px;
  ${(p) => {
    const across = p.$side === "top" || p.$side === "bottom";
    return across
      ? `left: calc(50% - 14px); width: 29px; height: 14px; ${p.$side}: 1px;`
      : `top: calc(50% - 15px); width: 14px; height: 30px; ${p.$side}: 1px;`;
  }}
  &::after {
    content: "";
    ${(p) =>
      p.$side === "top" || p.$side === "bottom"
        ? "width: 25px; height: 1px; background: repeating-linear-gradient(90deg, #f99b3e 0 5px, transparent 5px 7px);"
        : "width: 1px; height: 25px; background: repeating-linear-gradient(#f99b3e 0 5px, transparent 5px 7px);"}
  }
`;

const GREEN = "#58c043";
const STAMP_LINES = [569, 584.5, 615.5, 631.5, 647, 663, 678.5, 694];
const STAMP_TEXT: [number, string, string][] = [
  [627, "BF:", "10,47 m²"], [643, "NGF:", "10,47 m²"], [658, "RH:", "2,700 m"],
  [674, "Bodenbelag:", "---"], [690, "Deckenbelag:", "---"], [705.5, "Fenster/Raum (%):", "0,00"],
];
const DIAMONDS = [[462, 339.5], [547, 339.5], [462, 501.7], [317.5, 501.7], [317.5, 730.5], [547, 730.5], [432, 530], [432, 537.5], [432, 631.5]];
const NODES = [[368, 553], [497, 553], [368, 710], [497, 710], [477.5, 517]];

const FloorPlan = () => (
  <Plan width="500" height="500" viewBox="266 288 500 500" fill="none" fontFamily="'Liberation Sans', Arial, sans-serif" fontSize="11">
    <rect x="446" y="340" width="16" height="162" fill="#fafafa" />
    <rect x="318" y="486" width="144" height="16" fill="#fafafa" />
    <rect x="547" y="340" width="17" height="390" fill="#fafafa" />
    <rect x="274.5" y="296" width="477.5" height="477.5" stroke="#000" strokeWidth="1.8" />
    <path d="M446 339.5H318V485.5M563.5 339.5H709V730.5H563.5" stroke="#000" strokeWidth="1.6" />
    <path d="M446 340V485.5H318" stroke="#d4d4d4" strokeWidth="1.3" />
    <path d="M318 502H462V340H547V730H318Z" fill="#e2f9e0" />
    <path d="M318 501.5H462V340" stroke="#8fd388" strokeWidth="1.3" />
    <path d="M462 339.5H547M318 502V730.5H547" stroke="#1f4d1c" strokeWidth="1.8" />
    <path d="M547.5 340V730" stroke="#84808a" strokeWidth="1.3" />
    <path d="M548 339.5H563.5V730.5H548" stroke="#e03be6" strokeWidth="1.2" />
    <path d="M271 293L277 299M277 293L271 299M274 293V299" stroke="#333" strokeWidth="1.3" />

    <rect x="418.5" y="521.5" width="28.5" height="16.5" rx="8" fill="#cff5cb" stroke={GREEN} strokeWidth="1.4" />
    <text x="426" y="534" fill="#b4deb0">01</text>

    <rect x="368" y="553" width="129" height="157" fill="#d3f7cf" stroke={GREEN} strokeWidth="1.6" />
    <path d={STAMP_LINES.map((y) => `M368 ${y}H497`).join("") + "M432.5 584.5V615.5M432.5 600H497"} stroke={GREEN} strokeWidth="1.4" />
    <g fill="#b4deb0">
      <text x="374" y="565" fontWeight="700">Wohnen</text>
      <text x="374" y="581">Wohnung 1</text>
      <text x="374" y="604">R-001</text>
      <text x="490.5" y="596" textAnchor="end">±0,00</text>
      <text x="490.5" y="612" textAnchor="end">-0,10</text>
      {STAMP_TEXT.map(([y, a, b]) => (
        <React.Fragment key={a}>
          <text x="374" y={y}>{a}</text>
          <text x={b === "2,700 m" ? 486 : 490.5} y={y} textAnchor="end">{b}</text>
        </React.Fragment>
      ))}
    </g>
    <path d="M452.5 589H460.5L456.5 595.5ZM455 604.5H463L459 611Z" stroke={GREEN} strokeWidth="1.5" />

    {NODES.map(([x, y]) => <circle key={`${x}-${y}`} cx={x} cy={y} r="3" fill="#000" />)}
    {DIAMONDS.map(([x, y]) => <path key={`${x}-${y}`} d={`M${x - 3.3} ${y}L${x} ${y - 3.3}L${x + 3.3} ${y}L${x} ${y + 3.3}Z`} fill="#a81fb4" />)}
  </Plan>
);

/* ---------- floating palettes ---------- */

const Window = styled.section<{ $x: number; $y: number; $w: number }>`
  position: absolute;
  left: ${(p) => p.$x}px;
  top: ${(p) => p.$y}px;
  width: ${(p) => p.$w}px;
  border: 1px solid #e2e2e2;
  background: #ebebeb;
`;

const TitleBar = styled.div<{ $idle?: boolean }>`
  display: grid;
  grid-template-columns: 15px 1fr;
  align-items: center;
  justify-items: center;
  height: 16px;
  padding-bottom: 1px;
  border-bottom: 1px solid ${(p) => (p.$idle ? "#cccccc" : "#dcdcdc")};
  background: ${(p) => (p.$idle ? "#f6f6f6" : "#dedede")};
  color: ${(p) => (p.$idle ? "#555" : "#1d1d1f")};
`;

const CloseDot = styled.button<{ $idle?: boolean }>`
  width: 9px;
  height: 9px;
  border-radius: 50%;
  background: ${(p) => (p.$idle ? "#dcdcdc" : "#ee6a5f")};
`;

const Line = styled.div<{ $h: number; $white?: boolean; $pad?: string }>`
  display: flex;
  align-items: center;
  gap: 2px;
  height: ${(p) => p.$h}px;
  padding: ${(p) => p.$pad ?? "0 3px 0 1px"};
  background: ${(p) => (p.$white ? "#fff" : "transparent")};
  color: #333;
`;

const Bold = styled.strong`
  margin-left: 5px;
  font-weight: 700;
  color: #000;
`;

const Spacer = styled.span`
  flex: 1;
`;

const VariantArea = styled.div`
  display: flex;
  height: 138px;
  padding-right: 13px;
  background: #f8f8f8;
`;

const VariantList = styled.ul`
  flex: 1;
  display: grid;
  grid-template-rows: repeat(7, minmax(0, 1fr));
  border-right: 1px solid #ececec;
  background: #fff;
`;

const VariantRow = styled.li<{ $group?: boolean; $on?: boolean }>`
  display: flex;
  align-items: center;
  gap: ${(p) => (p.$group ? 5 : 2)}px;
  padding-left: ${(p) => (p.$group ? 2 : 0)}px;
  border-bottom: 1px solid #e0e0e0;
  font-weight: ${(p) => (p.$group ? 700 : 400)};
  color: #000;
  background: ${(p) => (p.$on ? "#dcdcdc" : p.$group ? "#f0f0f0" : "#fff")};
  &:last-child { border-bottom: 0; }
`;

const Stack = styled.div<{ $gap: number; $pad: string }>`
  display: flex;
  flex-direction: column;
  align-items: stretch;
  gap: ${(p) => p.$gap}px;
  padding: ${(p) => p.$pad};
`;

const PanelHeader = styled.button`
  display: flex;
  align-items: center;
  gap: 8px;
  width: 100%;
  height: 20px;
  padding-left: 5px;
  border-radius: 3px;
  background: #d5d5d5;
  color: #222;
`;

const ColorChip = styled.span<{ $c: string }>`
  width: 11px;
  height: 11px;
  margin-right: 1px;
  background: ${(p) => p.$c};
`;

const RelinkButton = styled(RaisedButton)`
  gap: 3px;
  color: #b5b5b5;
`;

const VariantsWindow = () => (
  <Window $x={660} $y={131} $w={238}>
    <TitleBar $idle><CloseDot $idle aria-label="Schließen" />Varianten</TitleBar>
    <Line $h={27}>
      Standard: Hauptmodell<Spacer />
      <RaisedButton $w={26} $h={20} aria-label="Varianten verwalten"><Icon n="variantsList" size={22} /></RaisedButton>
    </Line>
    <Line $h={24} $white $pad="0"><Icon n="pencil" size={18} /><Icon n="house" size={22} /><Bold>(Hauptmodell)</Bold></Line>
    <VariantArea>
      <VariantList>
        <VariantRow $group><Triangle />A</VariantRow>
        <VariantRow $on><Icon n="eye" size={21} />A-1</VariantRow>
        <VariantRow><Icon n="eyeOff" size={21} />A-2</VariantRow>
        <VariantRow $group><Triangle />B</VariantRow>
        <VariantRow><Icon n="eye" size={21} />B-1</VariantRow>
        <VariantRow><Icon n="eyeOff" size={21} />B-2</VariantRow>
        <VariantRow />
      </VariantList>
    </VariantArea>
    <Line $h={27}>Ausgewählt: 1 Bearbeitbar: 1</Line>
    <Stack $gap={38} $pad="0 2px">
      <RelinkButton $h={16} $off disabled><Icon n="relink" size={20} dim />Neu verknüpfen</RelinkButton>
      <PanelHeader><Triangle />Sperren/Einfärben</PanelHeader>
    </Stack>
    <Stack $gap={20} $pad="13px 2px 11px">
      <CheckLabel $gap={6}><CheckInput type="checkbox" />Passive Elemente sperren</CheckLabel>
      <CheckLabel $gap={6}><CheckInput type="checkbox" defaultChecked />Passive Elemente einfärben</CheckLabel>
    </Stack>
    <Line $h={23} $pad="0 2px 3px">
      <RaisedButton $w={26} $h={20} aria-label="Farbe"><ColorChip $c="#bdbdbd" /><Chevron /></RaisedButton>
      <Slider type="range" aria-label="Deckkraft" defaultValue={50} />
    </Line>
  </Window>
);

const TableArea = styled.div`
  display: grid;
  grid-template-columns: minmax(0, 1fr) 14px;
  height: 306px;
  margin-right: 1px;
  background: #fff;
`;

const ResultTable = styled.table`
  align-self: start;
  width: 100%;
  table-layout: fixed;
  border-collapse: collapse;
  th { height: 16px; padding: 0 0 0 3px; text-align: left; font-weight: 400; color: #000; white-space: nowrap; }
  th + th { border-left: 1px solid #e0e0e0; }
  td { height: 19px; padding: 0 0 0 4px; font-weight: 500; color: #fff; background: #2a62d9; }
`;

const SortHead = styled.span`
  display: flex;
  align-items: center;
  justify-content: space-between;
  padding-right: 2px;
`;

const TableGutter = styled.div`
  display: flex;
  flex-direction: column;
  border-left: 1px solid #e6e6e6;
  background: #f9f9f9;
`;

const GutterButton = styled.button`
  display: flex;
  align-items: center;
  justify-content: center;
  height: 16px;
  border: 1px solid #c8c8c8;
  background: #eee;
`;

const RoomsWindow = () => (
  <Window $x={928} $y={86} $w={268}>
    <TitleBar><CloseDot aria-label="Schließen" />Räume aktualisieren</TitleBar>
    <Line $h={23} $pad="0 5px 3px">Ergebnisse der letzten Aktualisierung:</Line>
    <TableArea>
      <ResultTable>
        <colgroup><col width="35" /><col width="56" /><col width="79" /><col /></colgroup>
        <thead>
          <tr>
            <th>Status</th>
            <th><SortHead>Nr.<Row $gap={0}><SortUp /><SortUp /></Row></SortHead></th>
            <th><SortHead>Name<SortUp /></SortHead></th>
            <th aria-label="Weitere" />
          </tr>
        </thead>
        <tbody>
          <tr>
            <td><Svg width="12" height="12" viewBox="0 0 12 12" fill="none" aria-label="Aktuell"><path d="M1.5 7L4.5 10.5L10.5 1.5" stroke="#1e2a38" strokeWidth="1.8" /></Svg></td>
            <td>R-001</td>
            <td>Wohnen</td>
            <td />
          </tr>
        </tbody>
      </ResultTable>
      <TableGutter><GutterButton aria-label="Spalten"><Chevron /></GutterButton></TableGutter>
    </TableArea>
    <Stack $gap={1} $pad="7px 5px 12px">
      <CheckLabel><CheckInput className="accent" type="checkbox" defaultChecked />Raumstempel-Positionen bei Aktualisierung behalten</CheckLabel>
      <Stack $gap={10} $pad="0">
        <CheckLabel><CheckInput type="checkbox" />Oberen Beschnitt bei Aktualisierung entfernen</CheckLabel>
        <CheckLabel><CheckInput type="checkbox" />Unteren Beschnitt bei Aktualisierung entfernen</CheckLabel>
      </Stack>
    </Stack>
    <Stack $gap={9} $pad="2px 6px 6px">
      <RaisedButton $h={19}>Auf ausgewählte Raumstempel zoomen</RaisedButton>
      <RaisedButton $h={19}>Ausgewählte Raumflächen aktualisieren</RaisedButton>
    </Stack>
  </Window>
);

/* ---------- quick options bar ---------- */

const StatusBar = styled.div`
  flex: none;
  display: grid;
  grid-template-columns: 67px repeat(11, minmax(0, 1fr));
  grid-template-rows: 100%;
  height: 17px;
  background: #e8e8e8;
`;

const ZoomTools = styled.div`
  display: flex;
  align-items: center;
  gap: 1px;
`;

const BareButton = styled.button`
  display: flex;
`;

const StatusButton = styled.button`
  display: flex;
  align-items: center;
  min-width: 0;
  padding: 0 3px;
  border-left: 1px solid #d2d2d2;
`;

const StatusText = styled.span`
  flex: 1;
  min-width: 0;
  padding: 1px 0 0 7px;
  text-align: center;
  white-space: nowrap;
`;

const STATUS: [string, string][] = [
  ["zoomFit", "85%"], ["rotate", "0,00°"], ["scale", "1:50"], ["layers", "00 Arbeitsei..."], ["composite", "Komplettes..."],
  ["pen", "04 S/W 1:20/..."], ["frame", "00 Arbeitsei..."], ["override", "Keine Übers..."], ["reno", "03 Abbruch/..."],
  ["variants", "V1"], ["dimStd", "DIN 1356 - R..."],
];

const QuickOptions = () => (
  <StatusBar>
    <ZoomTools>
      <BareButton aria-label="Vorheriger Zoom"><Icon n="zoomPrev" size={21} /></BareButton>
      <BareButton aria-label="Nächster Zoom"><Icon n="zoomNext" size={21} dim /></BareButton>
      <BareButton aria-label="Vergrößern"><Icon n="zoomIn" size={21} /></BareButton>
    </ZoomTools>
    {STATUS.map(([n, label]) => (
      <StatusButton key={n}><Icon n={n} size={20} /><StatusText>{label}</StatusText><Chevron /></StatusButton>
    ))}
  </StatusBar>
);

/* ---------- navigator ---------- */

const Navigator = styled.aside`
  flex: none;
  display: flex;
  flex-direction: column;
  width: 171px;
  border-left: 1px solid #dedede;
  background: #ebebeb;
  overflow: hidden;
`;

const NavTop = styled.div`
  flex: none;
  display: flex;
  align-items: center;
  height: 33px;
  padding-left: 3px;
`;

const NavDivider = styled.span`
  width: 1px;
  height: 18px;
  margin: 0 6px 0 7px;
  background: #d4d4d4;
`;

const NavMenu = styled(RaisedButton)`
  margin-left: auto;
`;

const SearchBox = styled.label`
  flex: none;
  display: flex;
  align-items: center;
  height: 19px;
  margin: 4px 1px 3px 3px;
  padding-right: 18px;
  border-bottom: 1px solid #c4c4c4;
  background: #fff;
  input { height: 18px; padding: 0 0 0 1px; border: 0; }
  input::placeholder { color: #b4b4b4; opacity: 1; }
`;

const TreeArea = styled.div`
  flex: 1;
  min-height: 0;
  display: grid;
  grid-template-columns: minmax(0, 1fr) 12px;
  grid-template-rows: minmax(0, 1fr) 13px;
  background: #f9f9f9;
`;

const Tree = styled.ul`
  display: grid;
  grid-template-rows: repeat(19, minmax(0, 1fr)) 5px;
  border-right: 1px solid #e6e6e6;
  border-bottom: 1px solid #e0e0e0;
  background: #fff;
  overflow: hidden;
`;

const TreeRow = styled.li<{ $level: number; $on?: boolean }>`
  display: flex;
  align-items: center;
  gap: 1px;
  min-width: 0;
  padding-left: ${(p) => p.$level * 13 + 3}px;
  white-space: nowrap;
  overflow: hidden;
  font-weight: ${(p) => (p.$on ? 700 : 400)};
  color: #000;
  background: ${(p) => (p.$on ? "#dadada" : "transparent")};
  &:last-child { align-items: flex-start; }
`;

const Twisty = styled.button`
  flex: none;
  width: 10px;
  height: 10px;
`;

const ScrollV = styled.span`
  justify-self: center;
  width: 8px;
  height: 117px;
  margin-top: 3px;
  border-radius: 4px;
  background: #c2c2c2;
`;

const ScrollH = styled.span`
  width: 68px;
  height: 8px;
  margin: 3px;
  border-radius: 4px;
  background: #c2c2c2;
`;

const NavFoot = styled.div`
  flex: none;
`;

const NavRow = styled.div<{ $h: number; $gap?: number; $pad?: string; $end?: boolean }>`
  display: flex;
  align-items: center;
  justify-content: ${(p) => (p.$end ? "flex-end" : "flex-start")};
  gap: ${(p) => p.$gap ?? 2}px;
  height: ${(p) => p.$h}px;
  padding: ${(p) => p.$pad ?? "0 1px 0 3px"};
`;

const NavLine = styled.div`
  height: 1px;
  background: #dadada;
`;

const Muted = styled.div<{ $h: number }>`
  height: ${(p) => p.$h}px;
  padding: 1px 0 0 3px;
  line-height: ${(p) => p.$h}px;
  color: #7c7c7c;
`;

const StoreyNo = styled.span`
  width: 36px;
`;

const WideButton = styled(RaisedButton)`
  flex: 1;
`;

const TREE: [number, string, string, boolean?][] = [
  [0, "house", "Ohne Titel", true], [1, "roomGray", "Geschosse", true], [2, "room", "1. OG"], [2, "room", "0. EG"], [2, "room", "-1. UG"],
  [1, "sections", "Schnitte"], [1, "elevations", "Ansichten"], [1, "interiors", "Innenansichten"], [1, "sheetSmall", "Arbeitsblätter"],
  [1, "detailSmall", "Details"], [1, "doc3d", "3D-Dokumente"], [1, "cube", "3D", true], [2, "cube", "Allgemeine Perspektive"],
  [2, "axono", "Allgemeine Axonometrie"], [2, "anim", "00 Neue Animation"], [1, "tableGrid", "Auswertungen", true],
  [2, "wall", "Elemente", true], [3, "tableGrid", "00-01 Berechnung"], [3, "tableGrid", "00-02 Räume - Flächen"], [3, "tableGrid", ""],
];

const NavigatorPanel = () => (
  <Navigator>
    <PaletteGrip><Grip $w={66} /></PaletteGrip>
    <NavTop>
      <RaisedButton $w={26} $on aria-label="Projekt-Mappe"><Icon n="house" size={24} /></RaisedButton>
      <NavDivider />
      <Row $gap={4}>
        <BareButton aria-label="Ausschnitt-Mappe"><Icon n="frameHouseSmall" /></BareButton>
        <BareButton aria-label="Layoutbuch"><Icon n="layoutBook" /></BareButton>
        <BareButton aria-label="Publisher-Sets"><Icon n="publisher" /></BareButton>
      </Row>
      <NavMenu $w={32} $h={20} aria-label="Menü"><Icon n="menu" size={20} /><Chevron /></NavMenu>
    </NavTop>
    <SearchBox><Icon n="search" size={24} /><TextInput placeholder="Projektmappe durchsuchen" aria-label="Projektmappe durchsuchen" /></SearchBox>
    <TreeArea>
      <Tree>
        {TREE.map(([level, n, label, open], i) => (
          <TreeRow key={i} $level={level} $on={label === "0. EG"}>
            <Twisty aria-label={open ? `${label} zuklappen` : undefined} tabIndex={open ? 0 : -1}>{open && <Chevron down thin />}</Twisty>
            <Icon n={n} size={24} />{label}
          </TreeRow>
        ))}
      </Tree>
      <ScrollV />
      <ScrollH />
    </TreeArea>
    <NavFoot>
      <NavRow $h={33} $gap={4}>
        <BareButton aria-label="Neu"><Icon n="plus" /></BareButton>
        <BareButton aria-label="Einstellungen"><Icon n="list" /></BareButton>
        <BareButton aria-label="Löschen"><Icon n="del" /></BareButton>
      </NavRow>
      <NavRow $h={20} $pad="0 0 0 2px"><PanelHeader><Triangle />Beschreibungen</PanelHeader></NavRow>
      <NavRow $h={24}>
        <Icon n="room" size={16} /><StoreyNo>0.</StoreyNo>
        <TextInput defaultValue="EG" aria-label="Geschossname" />
      </NavRow>
      <NavRow $h={19}><WideButton $h={19}>Einstellungen...</WideButton></NavRow>
      <NavRow $h={13} $pad="0"><Grip $w={66} /></NavRow>
      <NavRow $h={27}>
        <RaisedButton $w={26} aria-label="Transparentpause"><Icon n="trace" size={22} /></RaisedButton>
        <SelectBox $off>
          <Icon n="room" size={22} dim />
          <Select disabled aria-label="Referenzgeschoss"><option>0. EG</option></Select>
          <Chevron thin />
        </SelectBox>
      </NavRow>
      <NavRow $h={35} $gap={4} $pad="0 1px 2px 3px">
        <BareButton aria-label="Tauschen"><Icon n="swap" dim /></BareButton><Spacer />
        <BareButton aria-label="Verschieben"><Icon n="traceMove" dim /></BareButton>
        <BareButton aria-label="Drehen"><Icon n="traceRotate" dim /></BareButton>
        <BareButton aria-label="Zurücksetzen"><Icon n="traceReset" dim /></BareButton>
        <BareButton aria-label="Aktualisieren"><Icon n="refresh" dim /></BareButton>
      </NavRow>
      <NavLine />
      <Muted $h={25}>Transparentpause:</Muted>
      <NavRow $h={27} $gap={4}>
        <RaisedButton $w={26} $off disabled aria-label="Farbe der Referenz"><ColorChip $c="#f3988c" /><Chevron thin /></RaisedButton>
        <Slider $off disabled type="range" aria-label="Deckkraft Referenz" defaultValue={100} />
        <RaisedButton $w={12} $off disabled aria-label="Optionen"><Chevron thin /></RaisedButton>
      </NavRow>
      <Muted $h={22}>Aktiv:</Muted>
      <NavRow $h={27} $gap={4} $pad="0 17px 0 3px">
        <RaisedButton $w={26} $off disabled aria-label="Farbe Aktiv">
          <Svg width="12" height="12" viewBox="-6 -6 12 12" aria-hidden="true">
            <path d="M0 0V-6A6 6 0 0 1 5.2 3Z" fill="#f0897b" /><path d="M0 0L5.2 3A6 6 0 0 1 -5.2 3Z" fill="#87a5f3" /><path d="M0 0L-5.2 3A6 6 0 0 1 0 -6Z" fill="#7fc287" />
            <circle r="5.5" fill="none" stroke="#8b8b8b" />
          </Svg>
          <Chevron thin />
        </RaisedButton>
        <Slider $off disabled type="range" aria-label="Deckkraft Aktiv" defaultValue={100} />
      </NavRow>
      <NavRow $h={6} />
      <NavLine />
      <NavRow $h={33} $gap={4} $pad="3px 30px 0 0" $end>
        <BareButton aria-label="Ziehen"><Icon n="hand" dim /></BareButton>
        <BareButton aria-label="Überlagern"><Icon n="overlap" dim /></BareButton>
        <BareButton aria-label="Teilen"><Icon n="split" dim /></BareButton>
        <BareButton aria-label="Füllungen ausblenden"><Icon n="hatchOff" dim /></BareButton>
      </NavRow>
    </NavFoot>
  </Navigator>
);

/* ---------- footer ---------- */

const Footer = styled.footer`
  flex: none;
  display: flex;
  align-items: center;
  justify-content: flex-end;
  gap: 10px;
  height: 19px;
  padding-right: 9px;
  border-top: 1px solid #dcdcdc;
  background: linear-gradient(#e4e4e4, #d2d2d2);
`;

const FooterBar = styled.span`
  width: 1px;
  height: 13px;
  background: #777;
`;

const Brand = styled.span`
  font-family: Lato, "Liberation Sans", sans-serif;
  font-size: 12px;
  line-height: 18px;
  color: #222;
  strong { font-weight: 500; }
  span { font-weight: 300; }
`;

export default function App() {
  return (
    <Screen>
      <GlobalStyle />
      <TopToolbar />
      <InfoSection />
      <Main>
        <ToolPalette />
        <Center>
          <Tabs>
            <TabOverview aria-label="Tab-Übersicht"><Icon n="fourUp" size={24} /></TabOverview>
            <Tab><Icon n="roomBlue" size={22} />(!) 0. EG [0. EG]</Tab>
            <TabView aria-label="Ansichtsoptionen"><Icon n="houseList" size={20} /><Chevron down /></TabView>
          </Tabs>
          <Canvas>
            <FloorPlan />
            <Handle $side="top" />
            <Handle $side="bottom" />
            <Handle $side="left" />
            <Handle $side="right" />
            <VariantsWindow />
            <RoomsWindow />
          </Canvas>
          <QuickOptions />
        </Center>
        <NavigatorPanel />
      </Main>
      <Footer>
        <Icon n="windows" size={18} />
        <FooterBar />
        <Brand><strong>GRAPHISOFT</strong> <span>ID</span></Brand>
      </Footer>
    </Screen>
  );
}
